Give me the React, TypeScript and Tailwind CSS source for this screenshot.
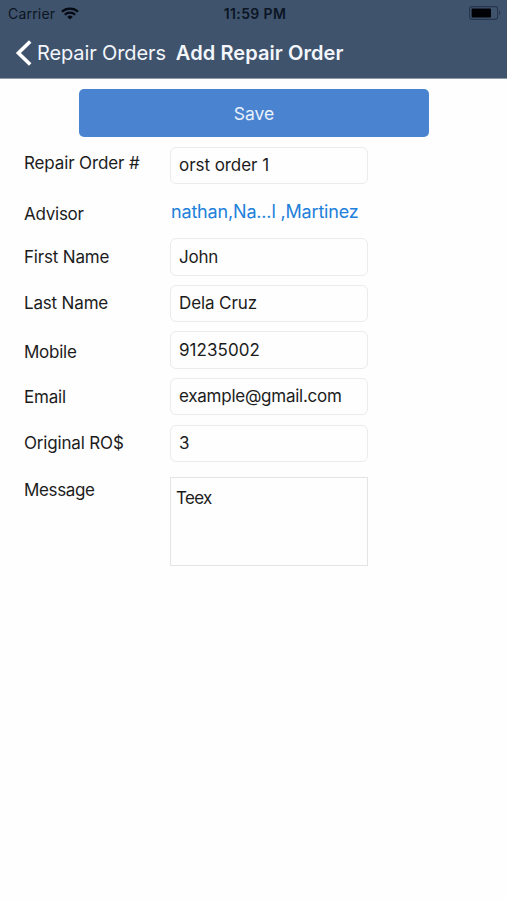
import clsx from "clsx";

type Field = {
    label: string;
    value: string;
    kind?: "input" | "link" | "textarea";
    rowClass: string;
    labelClass: string;
    valueClass: string;
};

const fields: Field[] = [
    {
        label: "Repair Order #",
        value: "orst order 1",
        rowClass: "h-[37px]",
        labelClass: "pt-1 tracking-[-0.13px]",
        valueClass: "tracking-[-0.05px]",
    },
    {
        label: "Advisor",
        value: "nathan,Na...l ,Martinez",
        kind: "link",
        rowClass: "mt-[10px] h-[36px]",
        labelClass: "pt-2 tracking-[-0.25px]",
        valueClass: "tracking-[-0.17px]",
    },
    {
        label: "First Name",
        value: "John",
        rowClass: "mt-2 h-[38px]",
        labelClass: "pt-[7px] tracking-[-0.17px]",
        valueClass: "pt-[2px] tracking-[-0.2px]",
    },
    {
        label: "Last Name",
        value: "Dela Cruz",
        rowClass: "mt-[9px] h-[37px]",
        labelClass: "pt-[6px] tracking-[-0.17px]",
        valueClass: "tracking-[-0.1px]",
    },
    {
        label: "Mobile",
        value: "91235002",
        rowClass: "mt-[9px] h-[38px]",
        labelClass: "pt-[9px] tracking-[-0.25px]",
        valueClass: "pt-[2px] tracking-[0.05px]",
    },
    {
        label: "Email",
        value: "example@gmail.com",
        rowClass: "mt-[9px] h-[37px]",
        labelClass: "pt-[7px] tracking-[-0.2px]",
        valueClass: "tracking-[-0.25px]",
    },
    {
        label: "Original RO$",
        value: "3",
        rowClass: "mt-[10px] h-[37px]",
        labelClass: "pt-[6px] tracking-[-0.17px]",
        valueClass: "",
    },
    {
        label: "Message",
        value: "Teex",
        kind: "textarea",
        rowClass: "mt-[15px] h-[89px]",
        labelClass: "pt-[1px] tracking-[-0.35px]",
        valueClass: "tracking-[-0.7px]",
    },
];

function WifiIcon() {
    return (
        <svg width="18" height="13" viewBox="0 0 17 13" fill="none" stroke="#050b14" preserveAspectRatio="none">
            <path d="M0.9 4.7a10.8 10.8 0 0 1 15.2 0" strokeWidth="2.3" />
            <path d="M3.6 7.7a6.9 6.9 0 0 1 9.8 0" strokeWidth="2.2" />
            <path d="M8.5 12.4 5.9 9.9a3.7 3.7 0 0 1 5.2 0z" fill="#050b14" stroke="none" />
        </svg>
    );
}

function BatteryIcon() {
    return (
        <svg width="33" height="14" viewBox="0 0 33 14" fill="none">
            <rect x="0.6" y="0.6" width="28" height="12.8" rx="2.6" stroke="#25364c" strokeWidth="1.1" />
            <rect x="2.6" y="2.4" width="19.4" height="9.2" rx="1" fill="#000206" />
            <path d="M30 4.8c1.6.6 1.6 3.8 0 4.4z" fill="#25364c" />
        </svg>
    );
}

function StatusBar() {
    return (
        <div className="grid h-[26px] grid-cols-3 items-center pr-[5px] pl-2 text-[#0b1524]">
            <div className="flex items-center gap-[6px]">
                <span className="text-[14px] tracking-[0.2px]">Carrier</span>
                <WifiIcon />
            </div>
            <span className="pt-px text-center text-[14px] font-semibold tracking-[0.35px]">
                11:59 PM
            </span>
            <div className="flex justify-end">
                <BatteryIcon />
            </div>
        </div>
    );
}

function NavBar() {
    return (
        <div className="flex h-[53px] items-center pl-[15px] text-[#f3f7fc]">
            <button className="flex items-center gap-1">
                <svg width="18" height="26" viewBox="0 0 18 26" fill="none" stroke="#ffffff">
                    <path d="M15.2 1.5 3.4 13l11.8 11.5" strokeWidth="3.6" />
                </svg>
                <span className="text-[20px] tracking-[-0.12px] whitespace-nowrap">Repair Orders</span>
            </button>
            <h1 className="ml-[10px] text-[20px] font-semibold tracking-[0.08px] whitespace-nowrap">
                Add Repair Order
            </h1>
        </div>
    );
}

function FieldRow({ label, value, kind = "input", rowClass, labelClass, valueClass }: Field) {
    return (
        <div className={clsx("flex", rowClass)}>
            <label className={clsx("w-[146px] shrink-0 text-[17px] leading-6", labelClass)}>
                {label}
            </label>
            {kind === "link" ? (
                <a className={clsx("pt-[6px] pl-px text-[18px] leading-6 whitespace-nowrap text-[#2180da]", valueClass)}>
                    {value}
                </a>
            ) : kind === "textarea" ? (
                <div className={clsx("w-[198px] border border-[#e4e4e4] px-[5px] pt-2 text-[17px] leading-6", valueClass)}>
                    {value}
                </div>
            ) : (
                <div className={clsx("flex w-[198px] items-center rounded-[6px] border border-[#ebebeb] px-2 text-[17px]", valueClass)}>
                    {value}
                </div>
            )}
        </div>
    );
}

export default function App() {
    return (
        <div className="min-h-[900px] w-full bg-[#fefefe] font-['Inter','Liberation_Sans',sans-serif] text-[#1c1c1c]">
            <header className="h-[79px] border-b border-[#8c98a8] bg-[#40536c]">
                <StatusBar />
                <NavBar />
            </header>
            <main className="pt-[10px] pl-6">
                <button className="ml-[55px] flex h-[48px] w-[350px] items-center justify-center rounded-[5px] bg-[#4a84d0] pt-[2px] text-[17.5px] text-[#e9f1fc]">
                    Save
                </button>
                <form className="mt-[10px]">
                    {fields.map((field) => (
                        <FieldRow key={field.label} {...field} />
                    ))}
                </form>
            </main>
        </div>
    );
}
